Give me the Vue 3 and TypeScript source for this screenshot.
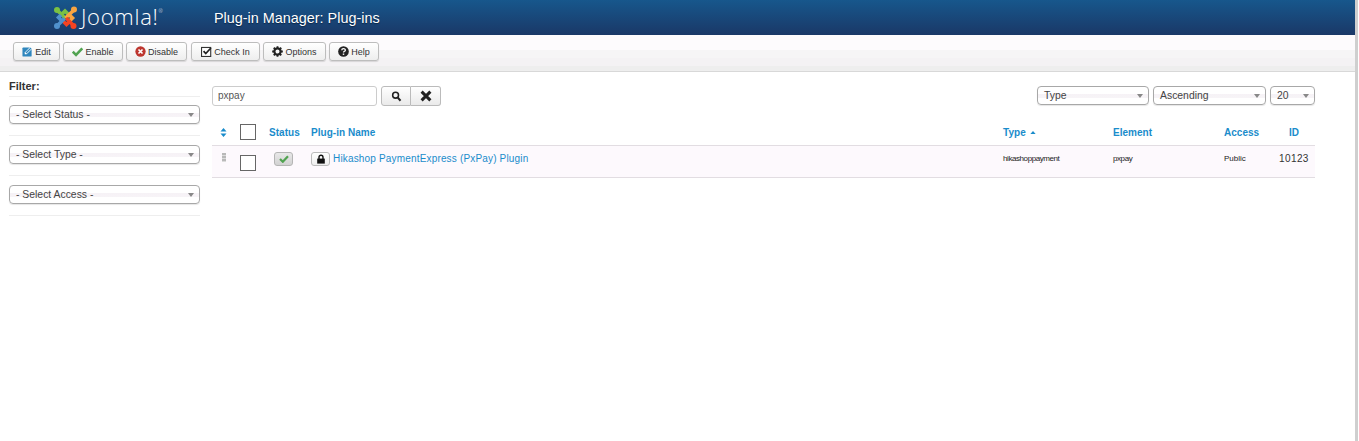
<script setup lang="ts">
const filters = ['- Select Status -', '- Select Type -', '- Select Access -']
const sorters = [
  { label: 'Type', cls: 'w-type' },
  { label: 'Ascending', cls: 'w-asc' },
  { label: '20', cls: 'w-num' },
]
</script>

<template>
  <div class="app">
    <div class="page">
      <header class="topbar">
        <div class="logo">
          <svg width="25" height="25" viewBox="0 0 25 25" class="logo-mark">
            <g fill="none" stroke-width="3.6">
              <path d="M4 5 L12.5 13.5" stroke="#7ac143" />
              <path d="M8.5 9.5 L12 6 L15 9" stroke="#7ac143" />
              <circle cx="4" cy="5" r="3" fill="#7ac143" stroke="none" />
              <path d="M21 5 L12.5 13" stroke="#f9a541" />
              <path d="M16 9.5 L19.5 13 L17 15.5" stroke="#f9a541" />
              <circle cx="21" cy="4.5" r="3" fill="#f9a541" stroke="none" />
              <path d="M21 21 L13 13" stroke="#f44321" />
              <path d="M16.5 16.5 L13.5 19.5 L10.5 16.5" stroke="#f44321" />
              <circle cx="20.5" cy="21" r="3" fill="#f44321" stroke="none" />
              <path d="M4 21 L11.5 13.5" stroke="#5091cd" />
              <path d="M9 16 L5.5 12.5 L8 10" stroke="#5091cd" />
              <circle cx="4" cy="21" r="3" fill="#5091cd" stroke="none" />
            </g>
          </svg>
          <span class="logo-text">Joomla!<sup class="reg">®</sup></span>
        </div>
        <h1 class="title">Plug-in Manager: Plug-ins</h1>
      </header>

      <div class="toolbar">
        <button class="btn b-edit">
          <svg class="ico" viewBox="0 0 12 12"><rect x=".5" y="1.5" width="10" height="10" rx="1" fill="#2f86bd" /><path d="M3 7 L3 9 L5 9 L11.6 2.4 L9.6 .4z" fill="#fff" /><path d="M3.8 7.2 L4.8 8.2 L10.4 2.6 L9.4 1.6z" fill="#2f86bd" /></svg>
          Edit
        </button>
        <button class="btn b-enable">
          <svg class="ico" viewBox="0 0 12 12"><path d="M.8 6.2 L4.4 9.8 L11.2 2.6" fill="none" stroke="#51a351" stroke-width="2.8" /></svg>
          Enable
        </button>
        <button class="btn b-disable">
          <svg class="ico" viewBox="0 0 12 12"><circle cx="6" cy="6" r="5.6" fill="#bd362f" /><path d="M3.8 3.8 L8.2 8.2 M8.2 3.8 L3.8 8.2" stroke="#fff" stroke-width="1.8" /></svg>
          Disable
        </button>
        <button class="btn b-check">
          <svg class="ico" viewBox="0 0 12 12"><rect x=".6" y="1.6" width="10" height="9.8" fill="#fff" stroke="#333" stroke-width="1.2" /><path d="M2.8 5.6 L5.2 8.2 L10.8 2.2" fill="none" stroke="#222" stroke-width="1.9" /></svg>
          Check In
        </button>
        <button class="btn b-opt">
          <svg class="ico" viewBox="0 0 12 12"><circle cx="6" cy="6" r="3.4" fill="none" stroke="#222" stroke-width="2.4" /><path d="M6 .2v2.4M6 9.4v2.4M.2 6h2.4M9.4 6h2.4M1.9 1.9l1.6 1.6M8.5 8.5l1.6 1.6M10.1 1.9L8.5 3.5M3.5 8.5L1.9 10.1" stroke="#222" stroke-width="2" /></svg>
          Options
        </button>
        <button class="btn b-help">
          <svg class="ico" viewBox="0 0 12 12"><circle cx="6" cy="6" r="5.8" fill="#222" /><path d="M4.1 4.6c0-2.3 3.9-2.3 3.9-.1 0 1.3-2 1.3-2 2.7" fill="none" stroke="#fff" stroke-width="1.4" /><rect x="5.2" y="8.2" width="1.6" height="1.5" fill="#fff" /></svg>
          Help
        </button>
      </div>

      <div class="main">
        <aside class="sidebar">
          <div class="filter-head">Filter:</div>
          <div v-for="f in filters" :key="f" class="filter-item">
            <div class="select">
              <span>{{ f }}</span><i class="caret"></i>
            </div>
          </div>
        </aside>

        <section class="content">
          <div class="search-row">
            <div class="search-input">pxpay</div>
            <div class="search-btns">
              <button class="sbtn">
                <svg width="11" height="11" viewBox="0 0 12 12"><circle cx="5" cy="4.6" r="3.2" fill="none" stroke="#222" stroke-width="1.7" /><path d="M7.2 7 L10.4 10.6" stroke="#222" stroke-width="2.2" /></svg>
              </button>
              <button class="sbtn">
                <svg width="12" height="12" viewBox="0 0 12 12"><path d="M1.6 1.6 L10.4 10.4 M10.4 1.6 L1.6 10.4" stroke="#222" stroke-width="3" /></svg>
              </button>
            </div>
            <div class="sorters">
              <div v-for="s in sorters" :key="s.label" class="select" :class="s.cls">
                <span>{{ s.label }}</span><i class="caret"></i>
              </div>
            </div>
          </div>

          <div class="grid head">
            <div class="c-sort">
              <svg width="7" height="9" viewBox="0 0 7 9"><path d="M3.5 0 L6.5 3.4 H.5z M3.5 9 L6.5 5.6 H.5z" fill="#1a8ccb" /></svg>
            </div>
            <div class="c-check"><span class="checkbox"></span></div>
            <div class="link-b">Status</div>
            <div class="link-b">Plug-in Name</div>
            <div class="link-b">Type <svg class="up" width="6" height="3" viewBox="0 0 7 4"><path d="M3.5 0 L7 4 H0z" fill="#1a8ccb" /></svg></div>
            <div class="link-b">Element</div>
            <div class="link-b">Access</div>
            <div class="link-b c-id-h">ID</div>
          </div>

          <div class="grid row">
            <div class="c-sort"><span class="handle"></span></div>
            <div class="c-check"><span class="checkbox"></span></div>
            <div class="c-status">
              <span class="status-btn">
                <svg width="10" height="8" viewBox="0 0 12 10"><path d="M1 5 L4.5 8.4 L11 1.6" fill="none" stroke="#51a351" stroke-width="2.8" /></svg>
              </span>
            </div>
            <div class="c-name">
              <span class="lock-btn">
                <svg width="10" height="10" viewBox="0 0 10 10"><path d="M3 5V3.2a2 2 0 0 1 4 0V5" fill="none" stroke="#111" stroke-width="1.4" /><rect x="1.2" y="4.6" width="7.6" height="5" fill="#111" /></svg>
              </span>
              <a class="name-link">Hikashop PaymentExpress (PxPay) Plugin</a>
            </div>
            <div class="tiny">hikashoppayment</div>
            <div class="tiny">pxpay</div>
            <div class="tiny pub">Public</div>
            <div class="c-id">10123</div>
          </div>
        </section>
      </div>
    </div>
    <div class="strip"></div>
  </div>
</template>

<style>
html, body { margin: 0; background: #fff; overflow: hidden; }
</style>

<style scoped>
.app {
  display: flex;
  width: 1359px;
  height: 441px;
  overflow: hidden;
  font-family: "Liberation Sans", Arial, sans-serif;
  color: #333;
}
.page { width: 1355px; flex: none; }
.strip { width: 3px; flex: none; background: #cfcfcf; }

.topbar {
  height: 35px;
  display: flex;
  align-items: center;
  background: linear-gradient(#17578c, #1a3867);
}
.logo {
  display: flex;
  align-items: center;
  margin-left: 53px;
  width: 161px;
  height: 30px;
  color: #fff;
}
.logo-mark { flex: none; margin-top: 0; }
.logo-text {
  font-family: "Open Sans", sans-serif;
  font-weight: 300;
  font-size: 22px;
  letter-spacing: .7px;
  line-height: 22px;
  margin-top: -4px;
  margin-left: 3px;
}
.reg { font-size: 5px; vertical-align: 12px; line-height: 0; letter-spacing: 0; }
.title {
  margin: 1px 0 0;
  font-size: 14.4px;
  font-weight: 400;
  color: #fff;
  text-shadow: 0 1px 1px #0a2748;
}

.toolbar {
  height: 37px;
  box-sizing: border-box;
  border-bottom: 1px solid #d8d8d8;
  padding: 7px 0 0 13px;
  display: flex;
  gap: 3px;
  background: linear-gradient(#fdfbfd 0, #fdfbfd 15px, #f6f5f6 15px, #f6f5f6 23px, #f4f2f4 23px, #f4f2f4 31px, #eeeeee 31px);
}
.btn {
  height: 19px;
  padding: 0;
  box-sizing: border-box;
  display: flex;
  align-items: center;
  justify-content: center;
  gap: 2px;
  border: 1px solid #bdbdbd;
  border-radius: 3px;
  background: linear-gradient(#ffffff, #eeeeee);
  box-shadow: 0 1px 1px rgba(0, 0, 0, .12);
  font: 9px "Liberation Sans", Arial, sans-serif;
  color: #333;
}
.ico { width: 11px; height: 11px; flex: none; }
.b-edit { width: 47px; }
.b-enable { width: 60px; }
.b-disable { width: 61px; }
.b-check { width: 69px; margin-left: 1px; }
.b-opt { width: 63px; }
.b-help { width: 50px; }

.main { display: flex; }
.sidebar { width: 191px; margin-left: 9px; flex: none; }
.filter-head {
  height: 25px;
  box-sizing: border-box;
  padding-top: 8px;
  font-size: 11px;
  line-height: 13px;
  font-weight: 700;
  border-bottom: 1px solid #eeeeee;
}
.filter-item {
  height: 40px;
  box-sizing: border-box;
  padding-top: 9px;
  border-bottom: 1px solid #eeeeee;
}
.filter-item:nth-child(2) { height: 39px; padding-top: 8px; }
.select {
  position: relative;
  height: 19px;
  box-sizing: border-box;
  border: 1px solid #a8a8a8;
  border-radius: 4px;
  padding-left: 6px;
  font-size: 10.4px;
  line-height: 17px;
  color: #444;
  background: linear-gradient(#fff 0, #fff 40%, #f6f2f6 40%, #f7f4f7 65%, #fff 65%, #fff 100%);
  box-shadow: 0 1px 1px rgba(0, 0, 0, .1);
}
.caret {
  position: absolute;
  right: 5px;
  top: 7px;
  border-left: 3px solid transparent;
  border-right: 3px solid transparent;
  border-top: 4px solid #888;
}

.content { width: 1103px; margin-left: 12px; flex: none; }
.search-row { display: flex; align-items: flex-start; padding-top: 14px; height: 48px; box-sizing: border-box; }
.search-input {
  width: 165px;
  height: 20px;
  box-sizing: border-box;
  border: 1px solid #ccc;
  border-radius: 3px;
  padding-left: 5px;
  font-size: 10px;
  line-height: 18px;
  color: #555;
}
.search-btns { display: flex; margin-left: 4px; }
.sbtn {
  width: 30px;
  height: 20px;
  padding: 0;
  display: flex;
  align-items: center;
  justify-content: center;
  border: 1px solid #bbb;
  background: linear-gradient(#fff, #eaeaea);
  border-radius: 3px 0 0 3px;
}
.sbtn + .sbtn { border-left: 0; border-radius: 0 3px 3px 0; }
.sorters { margin-left: auto; display: flex; gap: 4px; }
.w-type { width: 112px; }
.w-asc { width: 113px; }
.w-num { width: 45px; }

.grid {
  display: grid;
  grid-template-columns: 23px 34px 42px 692px 110px 111px 65px 26px;
  align-items: center;
  border-bottom: 1px solid #e2dde2;
}
.head { height: 26px; box-sizing: border-box; font-size: 10px; }
.head .c-check { margin-top: -2px; }
.row {
  height: 32px;
  box-sizing: border-box;
  background: #fdf9fd;
  font-size: 10px;
  align-items: start;
  padding-top: 6px;
}
.link-b { color: #1a8ccb; font-weight: 700; white-space: nowrap; letter-spacing: .03px; }
.up { vertical-align: 2px; margin-left: 1px; }
.c-sort { text-align: center; padding-right: 1px; }
.c-sort svg { display: block; margin: 0 auto; }
.c-check { padding-left: 5px; }
.checkbox {
  display: block;
  width: 16px;
  height: 16px;
  box-sizing: border-box;
  border: 1px solid #666;
  background: #fff;
}
.row .c-check { padding-top: 3px; }
.handle {
  display: block;
  width: 4px;
  height: 9px;
  margin: 1px 0 0 10px;
  background: repeating-linear-gradient(#b9b9b9 0 2px, #dcdcdc 2px 3px);
}
.c-status { padding-left: 5px; }
.status-btn {
  width: 19px;
  height: 14px;
  box-sizing: border-box;
  display: flex;
  align-items: center;
  justify-content: center;
  border: 1px solid #b5b5b5;
  border-radius: 3px;
  background: linear-gradient(#e8e8e8, #d2d2d2);
}
.c-name { display: flex; align-items: center; gap: 3px; }
.lock-btn {
  width: 19px;
  height: 14px;
  box-sizing: border-box;
  display: flex;
  align-items: center;
  justify-content: center;
  border: 1px solid #bbb;
  border-radius: 3px;
  background: linear-gradient(#fff, #eee);
}
.name-link { color: #1a8ccb; letter-spacing: .17px; white-space: nowrap; margin-top: -2px; }
.tiny { font-size: 8px; letter-spacing: -.42px; line-height: 14px; color: #222; white-space: nowrap; }
.pub { letter-spacing: 0; }
.c-id { margin-left: -10px; color: #333; letter-spacing: .4px; line-height: 14px; white-space: nowrap; }
</style>
